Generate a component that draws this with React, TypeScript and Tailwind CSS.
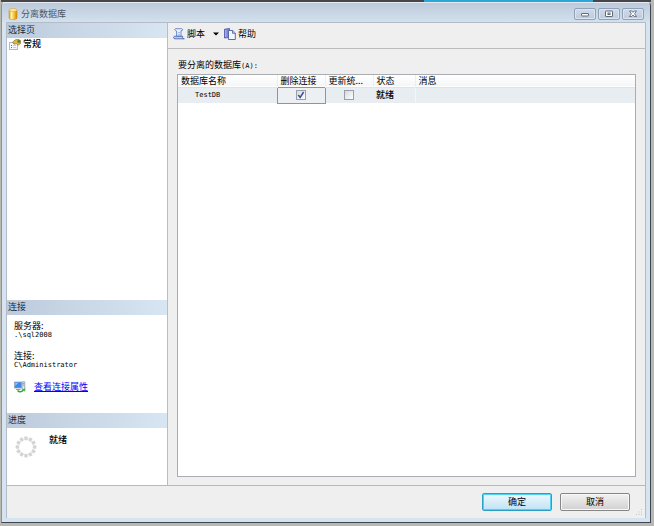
import React, { useState } from 'react';

interface DatabaseRow {
  name: string;
  dropConnections: boolean;
  updateStatistics: boolean;
  status: string;
  message: string;
}

const initialRows: DatabaseRow[] = [
  { name: 'TestDB', dropConnections: true, updateStatistics: false, status: '就绪', message: '' },
];

function DatabaseIcon() {
  return (
    <svg width="10" height="12" viewBox="0 0 10 12" aria-hidden="true">
      <defs>
        <linearGradient id="cylinder" x1="0" x2="1" y1="0" y2="0">
          <stop offset="0" stopColor="#e39a12" />
          <stop offset="0.3" stopColor="#fff3b4" />
          <stop offset="0.6" stopColor="#f8c840" />
          <stop offset="1" stopColor="#cf8208" />
        </linearGradient>
      </defs>
      <path d="M1 2v8c0 2.200 8 2.200 8 0V2z" fill="url(#cylinder)" stroke="#c98a1c" strokeWidth="0.5" />
      <ellipse cx="5" cy="2" rx="4" ry="1.500" fill="#ffe791" stroke="#d79a26" strokeWidth="0.5" />
    </svg>
  );
}

function PageIcon() {
  return (
    <svg width="12" height="11" viewBox="0 0 12 11" aria-hidden="true">
      <rect x="0.5" y="3.5" width="8" height="7" fill="#f4f7fb" stroke="#a9b9cf" />
      <path d="M2 6.5h1M2 8.5h1" stroke="#5572a0" />
      <path d="M4 6.500h3M4 8.500h3" stroke="#c4cfdf" />
      <path d="M3.500 3.200 6 1l3-.8 2.500 1.300v3L9.500 6 7.200 4.600 5 5.200z" fill="#e2b93c" stroke="#75611d" strokeWidth="0.6" />
      <path d="M8.500 1.200h2.500v2.500H8.500z" fill="#3f7d35" />
    </svg>
  );
}

function ScriptIcon() {
  return (
    <svg width="12" height="12" viewBox="0 0 12 12" aria-hidden="true">
      <path d="M2.500 .7h6c1.300 0 1.500 1.700.5 2H8v5.500H3.600V3C2 3 1 .9 2.500.7z" fill="#eaf2ff" stroke="#5f7fc0" strokeWidth="0.9" />
      <path d="M1.500 8.300h8.200c-.6 1 .2 2.700 1.600 2.500H2C.2 10.700.2 8.600 1.500 8.300z" fill="#b9d0f4" stroke="#4768b0" strokeWidth="0.9" />
      <path d="M5 4.500h2M5 6.300h2" stroke="#8faade" strokeWidth="0.8" />
    </svg>
  );
}

function HelpIcon() {
  return (
    <svg width="12" height="12" viewBox="0 0 12 12" aria-hidden="true">
      <path d="M.5 1.200 5.500.5v9L.5 10z" fill="#7e86d6" stroke="#4a50a6" strokeWidth="0.8" />
      <path d="M1.800 2v7" stroke="#c3c8f4" strokeWidth="0.8" />
      <path d="M4.500 2.500h4.200l2.600 2.600v6.400H4.500z" fill="#f3f7ff" stroke="#4b5f9e" strokeWidth="0.9" />
      <path d="M8.500 2.500v2.800h2.800" fill="#b9c9ea" stroke="#4b5f9e" strokeWidth="0.8" />
    </svg>
  );
}

function ConnectionIcon() {
  return (
    <svg width="12" height="12" viewBox="0 0 12 12" aria-hidden="true">
      <rect x="0.500" y="1" width="7" height="6" fill="#3c8be8" stroke="#93a9c4" strokeWidth="0.8" />
      <path d="M1.300 1.700h3L1.300 5z" fill="#8cc4fb" />
      <path d="M2 8.500h4.500" stroke="#8b9bb0" />
      <path d="M8 .8h2.800v7.700H8z" fill="#dde5ee" stroke="#8092aa" strokeWidth="0.7" />
      <path d="M8.600 2.500h1.600M8.600 4h1.600" stroke="#5c708c" strokeWidth="0.6" />
      <path d="M3.500 9.500c1.500 1.800 4.500 1.800 6.200-.6" fill="none" stroke="#3da432" strokeWidth="1.500" />
      <path d="m8 8.500 3.300-1.200-.2 3.400z" fill="#4bb53c" />
    </svg>
  );
}

function ProgressRing() {
  const dots = Array.from({ length: 12 }, (_, i) => i * 30);
  return (
    <svg width="22" height="22" viewBox="0 0 22 22" aria-hidden="true">
      {dots.map(angle => (
        <rect key={angle} x="9.300" y="0.600" width="3.400" height="3.600" rx="0.600" fill="#d4d4d4" transform={`rotate(${angle} 11 11)`} />
      ))}
    </svg>
  );
}

function SectionTitle({ children }: { children: React.ReactNode }) {
  return (
    <h2 className="h-[15px] shrink-0 bg-linear-to-r from-[#bccbdc] to-[#d8e5f2] px-px leading-[14px] text-[#1c2b3a]">
      {children}
    </h2>
  );
}

function CaptionButton({ label, children }: { label: string; children: React.ReactNode }) {
  return (
    <button
      type="button"
      aria-label={label}
      className="flex h-3 w-[22px] items-center justify-center rounded-xs border border-[#8fa2b9] bg-linear-to-b from-[#cfdbe9] to-[#bccbdd] shadow-[inset_0_0_0_1px_#dbe5f0]"
    >
      <svg width="10" height="8" viewBox="0 0 10 8" fill="#fff" stroke="#5f6b7b" aria-hidden="true">
        {children}
      </svg>
    </button>
  );
}

function CheckBox({ label, checked, onChange }: { label: string; checked: boolean; onChange: () => void }) {
  return (
    <div className="mx-auto grid size-[10px] place-items-center">
      <input
        type="checkbox"
        aria-label={label}
        checked={checked}
        onChange={onChange}
        className="col-start-1 row-start-1 size-[10px] appearance-none border border-[#9a9fa6] bg-linear-to-br from-[#d4d9df] to-white"
      />
      {checked && (
        <svg className="pointer-events-none col-start-1 row-start-1" width="8" height="8" viewBox="0 0 8 8" aria-hidden="true">
          <path d="M1.300 4 3.200 6.500 6.600 1" fill="none" stroke="#3a4f9c" strokeWidth="1.500" />
        </svg>
      )}
    </div>
  );
}

export default function App() {
  const [rows, setRows] = useState<DatabaseRow[]>(initialRows);

  const toggle = (name: string, key: 'dropConnections' | 'updateStatistics') => {
    setRows(rows.map(r => (r.name === name ? { ...r, [key]: !r[key] } : r)));
  };

  return (
    <div className="flex min-h-screen flex-col bg-[#b9b9b2] pr-[3px] pb-[3px] pl-px font-['Noto_Sans_CJK_SC',sans-serif] text-[9px] leading-3 text-black">
      <div className="flex h-0.5 bg-[#46464b]">
        <div className="ml-[65%] w-[26%] bg-[#2ba6d8]" />
      </div>

      <div className="flex flex-1 flex-col rounded-t border border-t-[#e4ebf3] border-r-[#3d4650] border-b-[#3d4650] border-l-[#8294a8] bg-[#d6e4f2] px-1 pb-1">
        <header className="-mx-1 flex h-[19px] shrink-0 items-center gap-[3px] rounded-t bg-linear-to-b from-[#bccadb] to-[#d3e1ee] px-1.5 pt-0.5 text-[#4c5866]">
          <DatabaseIcon />
          <h1 className="flex-1">分离数据库</h1>
          <div className="flex gap-0.5">
            <CaptionButton label="最小化">
              <rect x="1.500" y="3.500" width="7" height="2.500" rx="0.500" />
            </CaptionButton>
            <CaptionButton label="最大化">
              <rect x="1.500" y="1" width="7" height="5.500" rx="0.500" />
              <rect x="4" y="3" width="2" height="1.500" />
            </CaptionButton>
            <CaptionButton label="关闭">
              <path d="M1.500 1h2.300L5 2.400 6.200 1h2.300L6.600 3.700 8.500 6.500H6.200L5 5 3.800 6.500H1.500l1.900-2.800z" strokeWidth="0.900" />
            </CaptionButton>
          </div>
        </header>

        <div className="flex flex-1 flex-col border-x border-t border-[#b3bcc6] bg-[#efefef]">
          <div className="flex flex-1 border-b border-[#b8b8b8]">
            <aside className="flex w-[161px] shrink-0 flex-col border-r border-[#b8bdc3] bg-white">
              <SectionTitle>选择页</SectionTitle>
              <nav className="flex-1">
                <a href="#general" className="flex h-3 items-center gap-0.5 pl-0.5 font-medium">
                  <PageIcon />
                  常规
                </a>
              </nav>

              <SectionTitle>连接</SectionTitle>
              <div className="h-[98px] px-[7px] pt-1.5">
                <dl>
                  <dt className="leading-[10px]">服务器:</dt>
                  <dd className="mb-3 font-['DejaVu_Sans_Mono',monospace] text-[7px] leading-2">.\sql2008</dd>
                  <dt className="leading-[10px]">连接:</dt>
                  <dd className="font-['DejaVu_Sans_Mono',monospace] text-[7px] leading-2">C\Administrator</dd>
                </dl>
                <div className="mt-3 flex items-center gap-2">
                  <ConnectionIcon />
                  <a href="#properties" className="text-[#0000ff] underline">查看连接属性</a>
                </div>
              </div>

              <SectionTitle>进度</SectionTitle>
              <div className="flex h-[57px] gap-3 px-2 pt-2">
                <ProgressRing />
                <p className="font-medium leading-2">就绪</p>
              </div>
            </aside>

            <main className="flex min-w-0 flex-1 flex-col">
              <div className="flex h-[26px] shrink-0 items-center border-b border-[#bcbcbc] pb-1 pl-[5px]">
                <button type="button" className="flex items-center gap-0.5">
                  <ScriptIcon />
                  脚本
                  <svg className="ml-1.5" width="6" height="4" viewBox="0 0 6 4" aria-hidden="true">
                    <path d="M0 .5h6L3 3.500z" fill="#000" />
                  </svg>
                </button>
                <button type="button" className="ml-[5px] flex items-center gap-0.5">
                  <HelpIcon />
                  帮助
                </button>
              </div>

              <section className="flex flex-1 flex-col px-[9px] pt-2.5 pb-2">
                <h3 id="databases" className="h-[15px] pl-px leading-3">
                  要分离的数据库
                  <span className="font-['DejaVu_Sans_Mono',monospace] text-[7px]">(A):</span>
                </h3>
                <div className="flex-1 border border-[#a9acb0] bg-white">
                  <table aria-labelledby="databases" className="w-full table-fixed border-collapse text-left">
                    <colgroup>
                      <col className="w-[99px]" />
                      <col className="w-12" />
                      <col className="w-12" />
                      <col className="w-[42px]" />
                      <col />
                    </colgroup>
                    <thead>
                      <tr className="h-3 border-b border-[#dfe3e8] bg-linear-to-b from-white to-[#f5f6f8] leading-[11px]">
                        <th className="border-r border-[#eceef0] pl-[3px] font-normal">数据库名称</th>
                        <th className="border-r border-[#eceef0] pl-[3px] font-normal">删除连接</th>
                        <th className="border-r border-[#eceef0] pl-[3px] font-normal whitespace-nowrap">更新统...</th>
                        <th className="border-r border-[#eceef0] pl-[3px] font-normal">状态</th>
                        <th className="pl-[3px] font-normal">消息</th>
                      </tr>
                    </thead>
                    <tbody>
                      {rows.map(row => (
                        <tr key={row.name} className="h-4 bg-[#e8edf2]">
                          <td className="pl-[17px] font-['DejaVu_Sans_Mono',monospace] text-[7px]">{row.name}</td>
                          <td className="border border-[#8f959c] bg-[#edf0f3]">
                            <CheckBox
                              label="删除连接"
                              checked={row.dropConnections}
                              onChange={() => toggle(row.name, 'dropConnections')}
                            />
                          </td>
                          <td>
                            <CheckBox
                              label="更新统计信息"
                              checked={row.updateStatistics}
                              onChange={() => toggle(row.name, 'updateStatistics')}
                            />
                          </td>
                          <td className="border-r border-[#f4f6f8] pl-[3px] font-medium">{row.status}</td>
                          <td className="pl-[3px]">{row.message}</td>
                        </tr>
                      ))}
                    </tbody>
                  </table>
                </div>
              </section>
            </main>
          </div>

          <footer className="relative flex h-8 shrink-0 items-center justify-end gap-2 pr-[15px]">
            <button
              type="button"
              className="h-[18px] w-[70px] rounded-xs border border-[#2c9fc9] bg-linear-to-b from-[#eef8fd] to-[#bfe3f5] leading-3 shadow-[inset_0_0_0_1px_#4fd0f5]"
            >
              确定
            </button>
            <button
              type="button"
              className="h-[18px] w-[70px] rounded-xs border border-[#868686] bg-linear-to-b from-[#f2f2f2] to-[#d0d0d0] leading-3 shadow-[inset_0_0_0_1px_#f8f8f8]"
            >
              取消
            </button>
            <svg className="absolute right-0.5 bottom-0.5" width="7" height="7" viewBox="0 0 7 7" fill="#c4c4c4" aria-hidden="true">
              <path d="M5 0h1v1H5zM5 2.500h1v1H5zM2.500 2.500h1v1h-1zM5 5h1v1H5zM2.500 5h1v1h-1zM0 5h1v1H0z" />
            </svg>
          </footer>
        </div>
      </div>
    </div>
  );
}
